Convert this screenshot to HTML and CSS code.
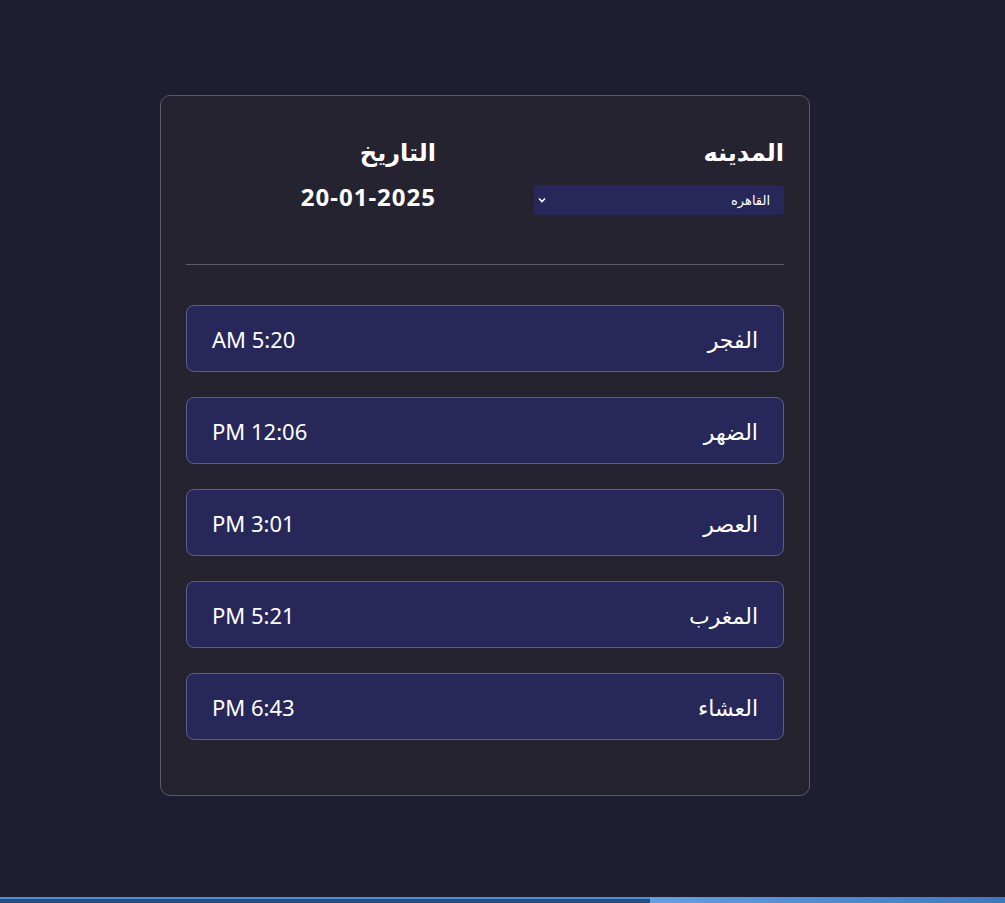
FILE: index.html
```html
<!DOCTYPE html>
<html lang="ar" dir="rtl">
<head>
<meta charset="utf-8">
<title>مواقيت الصلاة</title>
<link rel="stylesheet" href="styles.css">
</head>
<body>
<main class="card">
  <header class="top">
    <div class="col">
      <h2 class="label">المدينه</h2>
      <div class="select-wrap">
        <select class="city">
          <option>القاهره</option>
        </select>
        <svg class="chev" width="8" height="6" viewBox="0 0 8 6"><path d="M1 1.5 L4 4.5 L7 1.5" fill="none" stroke="#fff" stroke-width="1.6"/></svg>
      </div>
    </div>
    <div class="col">
      <h2 class="label">التاريخ</h2>
      <div class="date">20-01-2025</div>
    </div>
  </header>
  <hr class="divider">
  <ul class="list">
    <li class="row"><span class="name">الفجر</span><span class="time" dir="ltr">AM 5:20</span></li>
    <li class="row"><span class="name">الضهر</span><span class="time" dir="ltr">PM 12:06</span></li>
    <li class="row"><span class="name">العصر</span><span class="time" dir="ltr">PM 3:01</span></li>
    <li class="row"><span class="name">المغرب</span><span class="time" dir="ltr">PM 5:21</span></li>
    <li class="row"><span class="name">العشاء</span><span class="time" dir="ltr">PM 6:43</span></li>
  </ul>
</main>
<div class="taskbar"><div class="tb-left"></div><div class="tb-right"></div></div>
</body>
</html>
```
FILE: styles.css
```css
* { box-sizing: border-box; }
html, body { margin: 0; padding: 0; }
body {
  background: #1e1e33;
  min-height: 903px;
  font-family: "Noto Sans", "DejaVu Sans", sans-serif;
  color: #fff;
  padding-top: 95px;
}
.card {
  width: 650px;
  margin-right: 195px;
  background: #25232f;
  border: 1px solid #5c5a68;
  border-radius: 10px;
  padding: 36px 25px 55px;
}
.top {
  display: flex;
  justify-content: space-between;
}
.col {
  width: 250px;
  display: flex;
  flex-direction: column;
}
.label {
  margin: 0;
  font-size: 24px;
  font-weight: 700;
  line-height: 40px;
}
.select-wrap {
  position: relative;
  margin-top: 13px;
  height: 30px;
}
.city {
  appearance: none;
  -webkit-appearance: none;
  width: 250px;
  height: 30px;
  border: none;
  border-radius: 4px;
  background: #27275a;
  color: #fff;
  font-family: inherit;
  font-size: 13px;
  padding: 0 14px 0 20px;
  direction: rtl;
  outline: none;
}
.chev {
  position: absolute;
  left: 4px;
  top: 12px;
  pointer-events: none;
}
.date {
  margin-top: 7px;
  font-size: 24px;
  font-weight: 700;
  line-height: 36px;
  letter-spacing: 1px;
  direction: ltr;
  text-align: right;
}
.divider {
  border: none;
  border-top: 1px solid #5c5a68;
  margin: 49px 0 40px;
}
.list {
  list-style: none;
  margin: 0;
  padding: 0;
  display: flex;
  flex-direction: column;
  gap: 25px;
}
.row {
  height: 67px;
  display: flex;
  justify-content: space-between;
  align-items: center;
  padding: 0 25px;
  background: #27275a;
  border: 1px solid #5d5c8a;
  border-radius: 8px;
  font-size: 22px;
}
.taskbar {
  position: fixed;
  left: 0;
  right: 0;
  bottom: 0;
  height: 6px;
  display: flex;
  direction: ltr;
}
.tb-left {
  width: 650px;
  background: linear-gradient(#4f8ccc 0, #4f8ccc 2px, #1f4f86 2px);
}
.tb-right {
  flex: 1;
  background: linear-gradient(90deg, #62a0e0, #3f78c0);
}
```
